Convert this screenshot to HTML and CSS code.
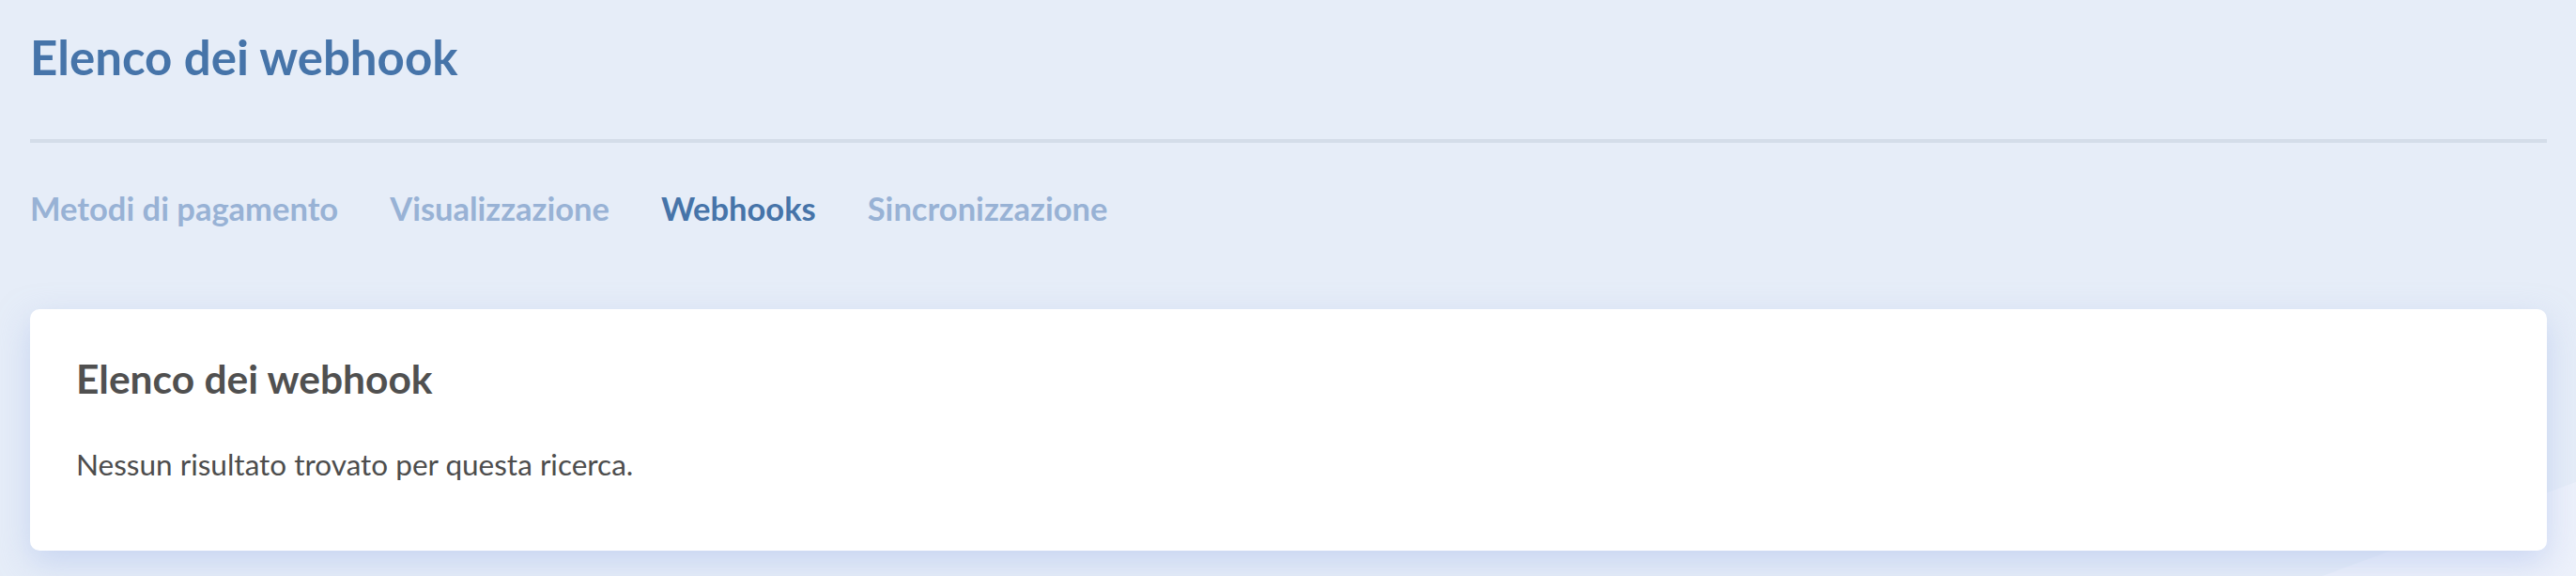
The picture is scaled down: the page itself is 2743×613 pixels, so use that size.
FILE: index.html
```html
<!DOCTYPE html>
<html lang="it">
<head>
<meta charset="utf-8">
<title>Elenco dei webhook</title>
<link rel="stylesheet" href="styles.css">
</head>
<body>
<div class="page">
  <header class="page-header">
    <h1 class="page-title">Elenco dei webhook</h1>
  </header>
  <nav class="tabs">
    <a class="tab">Metodi di pagamento</a>
    <a class="tab">Visualizzazione</a>
    <a class="tab tab-active">Webhooks</a>
    <a class="tab">Sincronizzazione</a>
  </nav>
  <section class="card">
    <h2 class="card-title">Elenco dei webhook</h2>
    <p class="card-text">Nessun risultato trovato per questa ricerca.</p>
  </section>
</div>
<div class="bg-shape"></div>
</body>
</html>
```

FILE: styles.css
```css
html, body {
  margin: 0;
  padding: 0;
}
body {
  background: #e6edf8;
  font-family: Lato, "Open Sans", sans-serif;
  height: 613px;
  overflow: hidden;
  position: relative;
}
.page {
  padding: 0 31px 0 32px;
  position: relative;
  z-index: 1;
}
.page-header {
  border-bottom: 4px solid #d4dde9;
  padding-top: 31px;
  height: 152px;
  box-sizing: border-box;
}
.page-title {
  margin: 0;
  font-size: 51px;
  font-weight: 700;
  color: #4674a9;
  line-height: 60px;
}
.tabs {
  display: flex;
  gap: 55px;
  padding-top: 48px;
  height: 177px;
  box-sizing: border-box;
}
.tab {
  font-size: 34.5px;
  font-weight: 700;
  color: #98b2d5;
  line-height: 44px;
}
.tab-active {
  color: #4674a9;
}
.card {
  background: #fff;
  border-radius: 10px;
  box-shadow: 0 12px 34px rgba(170, 190, 235, 0.5);
  padding: 49px 49px 0;
  height: 257px;
  box-sizing: border-box;
}
.card-title {
  margin: 0;
  font-size: 42.5px;
  font-weight: 700;
  color: #505050;
  line-height: 50px;
}
.card-text {
  margin: 46px 0 0;
  font-size: 31.5px;
  color: #4d4d4d;
  line-height: 40px;
}
.bg-shape {
  position: absolute;
  right: 0;
  bottom: 0;
  width: 270px;
  height: 100px;
  background: #edf1fb;
  clip-path: polygon(100% 0, 100% 100%, 0 100%);
}
```
